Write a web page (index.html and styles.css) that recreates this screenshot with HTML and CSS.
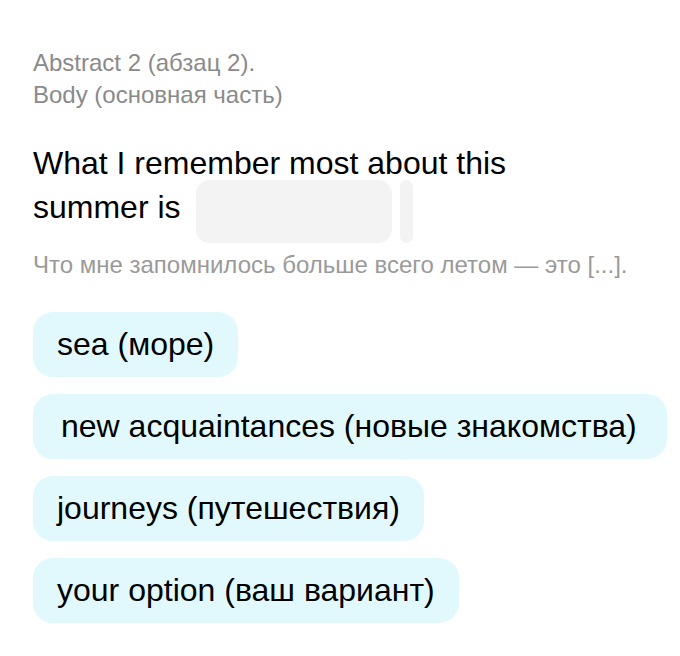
FILE: index.html
```html
<!DOCTYPE html>
<html lang="en">
<head>
<meta charset="utf-8">
<link rel="stylesheet" href="styles.css">
</head>
<body>
<main class="card">
  <div class="caption">
    <div>Abstract 2 (абзац 2).</div>
    <div>Body (основная часть)</div>
  </div>
  <p class="sentence">What I remember most about this summer is <span class="blank"></span><span class="cursor"></span></p>
  <p class="translation">Что мне запомнилось больше всего летом — это [...].</p>
  <div class="options">
    <div class="chip">sea (море)</div>
    <div class="chip chip-wide">new acquaintances (новые знакомства)</div>
    <div class="chip">journeys (путешествия)</div>
    <div class="chip">your option (ваш вариант)</div>
  </div>
</main>
</body>
</html>
```
FILE: styles.css
```css
html, body {
  margin: 0;
  padding: 0;
  background: #ffffff;
}
body {
  font-family: "Liberation Sans", Arial, sans-serif;
  color: #000;
}
.card {
  padding: 47px 12px 0 33px;
}
.caption {
  font-size: 24px;
  line-height: 32px;
  color: #8a8a8a;
}
.sentence {
  margin: 30px 0 0 0;
  font-size: 32px;
  line-height: 44px;
  width: 520px;
}
.blank,
.cursor {
  display: inline-block;
  height: 63px;
  background: #f3f3f3;
  vertical-align: -25px;
  margin-top: -5px;
}
.blank {
  width: 196px;
  border-radius: 14px;
  margin-left: 7px;
}
.cursor {
  width: 13px;
  border-radius: 7px;
  margin-left: 8px;
}
.translation {
  margin: 6px 0 0 0;
  font-size: 24px;
  line-height: 32px;
  color: #9a9a9a;
}
.options {
  margin-top: 31px;
  display: flex;
  flex-direction: column;
  align-items: flex-start;
  gap: 17px;
}
.chip {
  background: #e1f9fd;
  border-radius: 20px;
  height: 65px;
  display: flex;
  align-items: center;
  padding: 0 24px;
  font-size: 32px;
  white-space: nowrap;
}
.chip-wide {
  padding: 0 30px 0 28px;
}
```
